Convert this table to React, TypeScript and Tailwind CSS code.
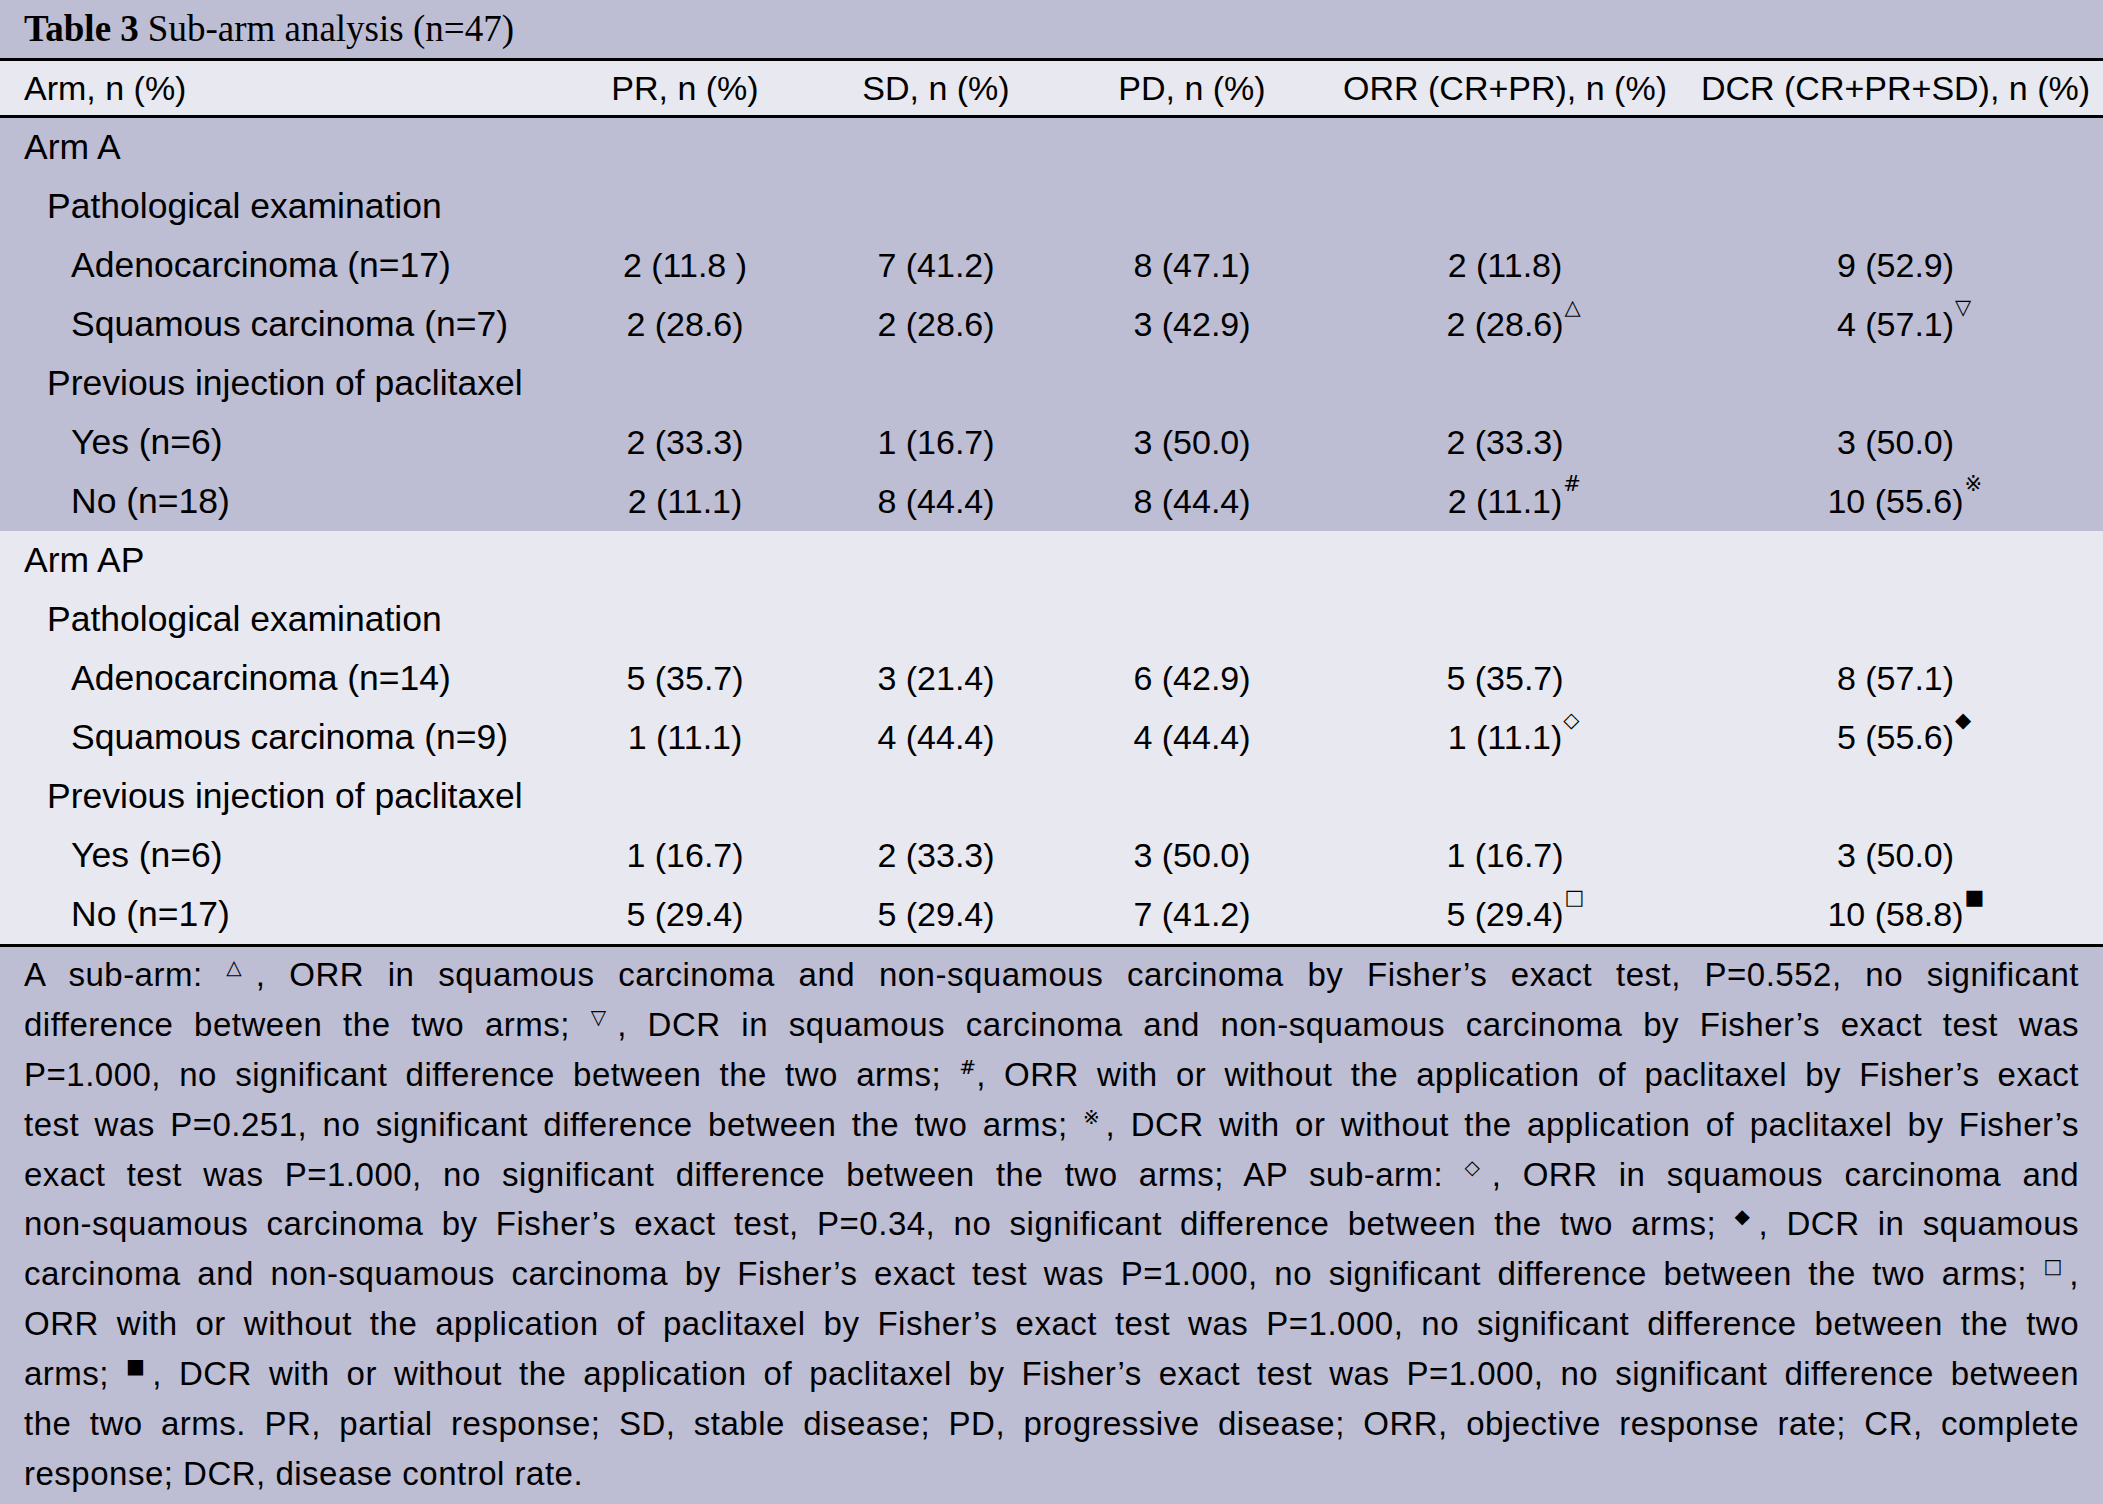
import React from "react";

type Row = {
	label: string;
	level: number;
	cells?: string[];
	marks?: (string | null)[];
};

const armA: Row[] = [
	{ label: "Arm A", level: 0 },
	{ label: "Pathological examination", level: 1 },
	{
		label: "Adenocarcinoma (n=17)",
		level: 2,
		cells: ["2 (11.8 )", "7 (41.2)", "8 (47.1)", "2 (11.8)", "9 (52.9)"],
	},
	{
		label: "Squamous carcinoma (n=7)",
		level: 2,
		cells: ["2 (28.6)", "2 (28.6)", "3 (42.9)", "2 (28.6)", "4 (57.1)"],
		marks: [null, null, null, "△", "▽"],
	},
	{ label: "Previous injection of paclitaxel", level: 1 },
	{
		label: "Yes (n=6)",
		level: 2,
		cells: ["2 (33.3)", "1 (16.7)", "3 (50.0)", "2 (33.3)", "3 (50.0)"],
	},
	{
		label: "No (n=18)",
		level: 2,
		cells: ["2 (11.1)", "8 (44.4)", "8 (44.4)", "2 (11.1)", "10 (55.6)"],
		marks: [null, null, null, "#", "※"],
	},
];

const armAP: Row[] = [
	{ label: "Arm AP", level: 0 },
	{ label: "Pathological examination", level: 1 },
	{
		label: "Adenocarcinoma (n=14)",
		level: 2,
		cells: ["5 (35.7)", "3 (21.4)", "6 (42.9)", "5 (35.7)", "8 (57.1)"],
	},
	{
		label: "Squamous carcinoma (n=9)",
		level: 2,
		cells: ["1 (11.1)", "4 (44.4)", "4 (44.4)", "1 (11.1)", "5 (55.6)"],
		marks: [null, null, null, "◇", "◆"],
	},
	{ label: "Previous injection of paclitaxel", level: 1 },
	{
		label: "Yes (n=6)",
		level: 2,
		cells: ["1 (16.7)", "2 (33.3)", "3 (50.0)", "1 (16.7)", "3 (50.0)"],
	},
	{
		label: "No (n=17)",
		level: 2,
		cells: ["5 (29.4)", "5 (29.4)", "7 (41.2)", "5 (29.4)", "10 (58.8)"],
		marks: [null, null, null, "□", "■"],
	},
];

const headers = [
	"PR, n (%)",
	"SD, n (%)",
	"PD, n (%)",
	"ORR (CR+PR), n (%)",
	"DCR (CR+PR+SD), n (%)",
];

// column widths chosen so each column's centre matches the table
const gridCols = "grid grid-cols-[560px_250px_252px_260px_366px_1fr]";

const indent = ["pl-[24px]", "pl-[47px]", "pl-[71px]"];

function Sup({ children }: { children: React.ReactNode }) {
	return (
		<span className="align-[0.6em] leading-none text-[20px] tracking-normal font-['DejaVu_Sans',sans-serif]">
			{children}
		</span>
	);
}

function TableRow({ row }: { row: Row }) {
	return (
		<div className={`${gridCols} h-[59px] items-center`}>
			<div className={`${indent[row.level]} text-[35.5px]`}>{row.label}</div>
			{row.cells?.map((c, i) => (
				<div key={i} className="flex justify-center text-[34px]">
					<span className="relative">
						{c}
						{row.marks?.[i] && (
							<span className="absolute left-full top-[-7px] ml-[1px] text-[21px] font-['DejaVu_Sans',sans-serif]">
								{row.marks[i]}
							</span>
						)}
					</span>
				</div>
			))}
		</div>
	);
}

const notes: React.ReactNode[] = [
	<>
		A sub-arm: <Sup>△</Sup>, ORR in squamous carcinoma and non-squamous carcinoma
		by Fisher’s exact test, P=0.552, no significant
	</>,
	<>
		difference between the two arms; <Sup>▽</Sup>, DCR in squamous carcinoma and
		non-squamous carcinoma by Fisher’s exact test was
	</>,
	<>
		P=1.000, no significant difference between the two arms; <Sup>#</Sup>, ORR
		with or without the application of paclitaxel by Fisher’s exact
	</>,
	<>
		test was P=0.251, no significant difference between the two arms;{" "}
		<Sup>※</Sup>, DCR with or without the application of paclitaxel by Fisher’s
	</>,
	<>
		exact test was P=1.000, no significant difference between the two arms; AP
		sub-arm: <Sup>◇</Sup>, ORR in squamous carcinoma and
	</>,
	<>
		non-squamous carcinoma by Fisher’s exact test, P=0.34, no significant
		difference between the two arms; <Sup>◆</Sup>, DCR in squamous
	</>,
	<>
		carcinoma and non-squamous carcinoma by Fisher’s exact test was P=1.000, no
		significant difference between the two arms; <Sup>□</Sup>,
	</>,
	<>
		ORR with or without the application of paclitaxel by Fisher’s exact test was
		P=1.000, no significant difference between the two
	</>,
	<>
		arms; <Sup>■</Sup>, DCR with or without the application of paclitaxel by
		Fisher’s exact test was P=1.000, no significant difference between
	</>,
	<>
		the two arms. PR, partial response; SD, stable disease; PD, progressive
		disease; ORR, objective response rate; CR, complete
	</>,
];

export default function App() {
	return (
		<div className="w-[2103px] min-h-[1504px] bg-[#bdbdd4] text-black font-['Liberation_Sans',Arial,sans-serif]">
			{/* Caption */}
			<div className="h-[58px] flex items-center pl-[24px] text-[37px] font-['Liberation_Serif',serif]">
				<span className="font-bold">Table 3</span>
				<span className="ml-[9px]">Sub-arm analysis (n=47)</span>
			</div>

			{/* Header */}
			<div
				className={`${gridCols} h-[60px] items-center bg-[#e8e8f1] border-y-[3px] border-black text-[34px]`}
			>
				<div className="pl-[24px]">Arm, n (%)</div>
				{headers.map((h) => (
					<div key={h} className="text-center whitespace-nowrap">
						{h}
					</div>
				))}
			</div>

			{/* Arm A */}
			<div className="bg-[#bdbdd4]">
				{armA.map((r, i) => (
					<TableRow key={i} row={r} />
				))}
			</div>

			{/* Arm AP */}
			<div className="bg-[#e8e8f1] border-b-[3px] border-black">
				{armAP.map((r, i) => (
					<TableRow key={i} row={r} />
				))}
			</div>

			{/* Footnote */}
			<div className="px-[24px] pt-[3px] text-[33px] leading-[49.9px] tracking-[0.5px]">
				{notes.map((n, i) => (
					<div
						key={i}
						className="h-[49.9px] text-justify [text-align-last:justify]"
					>
						{n}
					</div>
				))}
				<div className="h-[49.9px]">response; DCR, disease control rate.</div>
			</div>
		</div>
	);
}
